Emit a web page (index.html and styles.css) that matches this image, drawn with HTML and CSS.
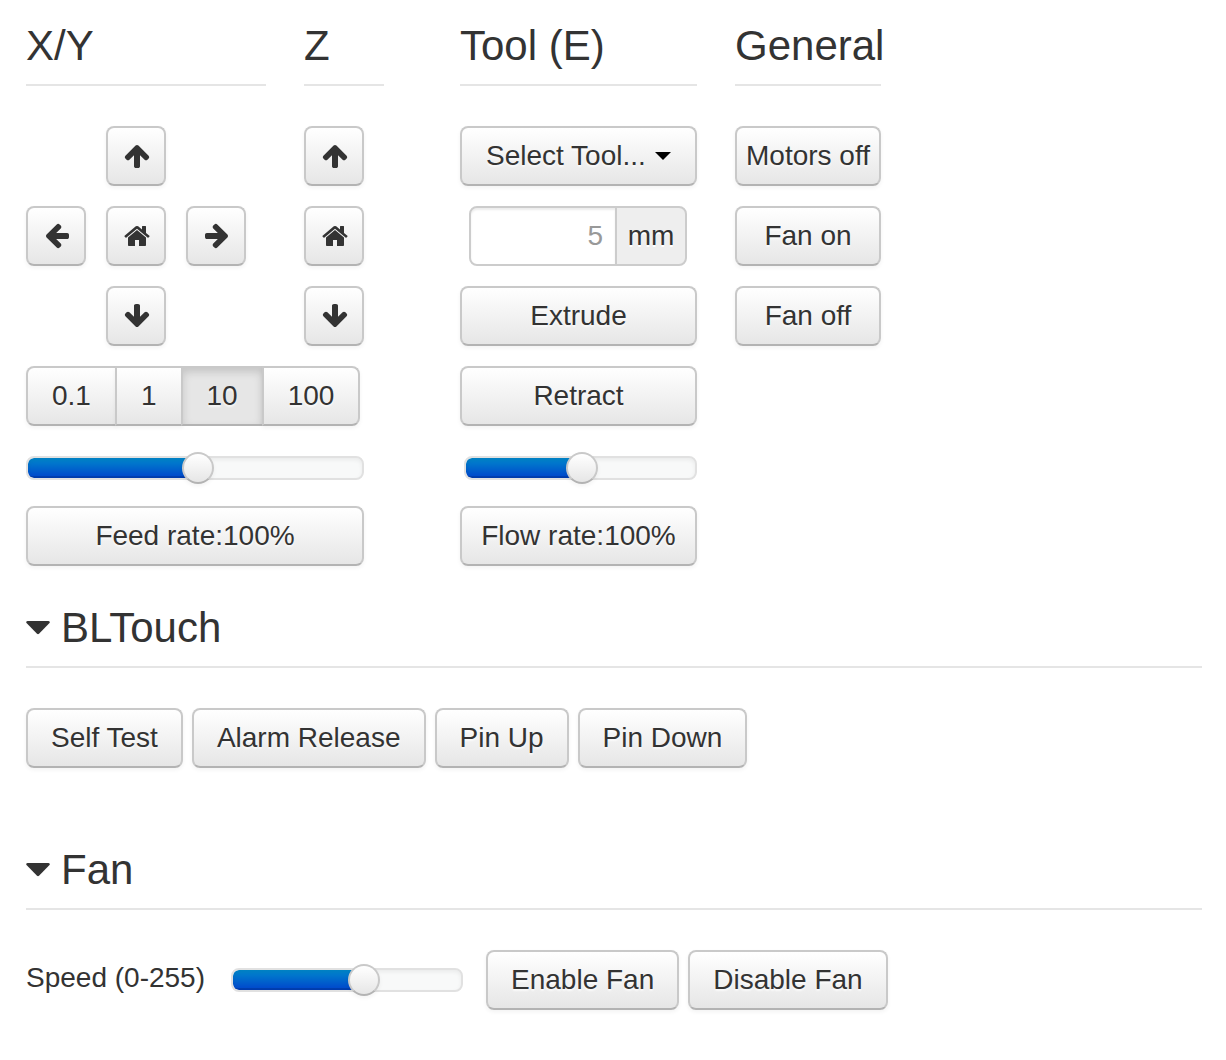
FILE: index.html
```html
<!DOCTYPE html>
<html lang="en">
<head>
<meta charset="utf-8">
<meta name="viewport" content="width=device-width, initial-scale=1">
<title>Printer control</title>
<link rel="stylesheet" href="styles.css">
</head>
<body>
<svg class="sprite" aria-hidden="true">
  <symbol id="arrow-up" viewBox="0 0 1792 1792"><path fill="currentColor" d="M1675 971q0 51-37 90l-75 75q-38 38-91 38-54 0-90-38l-294-293v704q0 52-37.500 84.500t-90.500 32.500h-128q-53 0-90.500-32.500t-37.500-84.500v-704l-294 293q-36 38-90 38t-90-38l-75-75q-38-38-38-90 0-53 38-91l651-651q35-37 90-37 54 0 91 37l651 651q37 39 37 91z"/></symbol>
  <symbol id="home" viewBox="0 0 1792 1792"><path fill="currentColor" d="M1472 992v480q0 26-19 45t-45 19h-384v-384h-256v384h-384q-26 0-45-19t-19-45v-480q0-1 .5-3t.5-3l575-474 575 474q1 2 1 6zm223-69l-62 74q-8 9-21 11h-3q-13 0-21-7l-692-577-692 577q-12 8-24 7-13-2-21-11l-62-74q-8-10-7-23.500t11-21.500l719-599q32-26 76-26t76 26l244 204v-195q0-14 9-23t23-9h192q14 0 23 9t9 23v408l219 182q10 8 11 21.500t-7 23.500z"/></symbol>
</svg>
<main class="control">
  <div class="panels">
    <div class="axes">
      <div class="axes-row">
        <section class="panel panel-xy">
          <h2 class="heading">X/Y</h2>
          <div class="pad">
            <button class="btn btn-icon pad-up" type="button" aria-label="Y up"><svg class="icon"><use href="#arrow-up"/></svg></button>
            <button class="btn btn-icon pad-left" type="button" aria-label="X left"><svg class="icon icon-left"><use href="#arrow-up"/></svg></button>
            <button class="btn btn-icon pad-home" type="button" aria-label="Home X/Y"><svg class="icon"><use href="#home"/></svg></button>
            <button class="btn btn-icon pad-right" type="button" aria-label="X right"><svg class="icon icon-right"><use href="#arrow-up"/></svg></button>
            <button class="btn btn-icon pad-down" type="button" aria-label="Y down"><svg class="icon icon-down"><use href="#arrow-up"/></svg></button>
          </div>
        </section>
        <section class="panel panel-z">
          <h2 class="heading">Z</h2>
          <div class="stack">
            <button class="btn btn-icon" type="button" aria-label="Z up"><svg class="icon"><use href="#arrow-up"/></svg></button>
            <button class="btn btn-icon" type="button" aria-label="Home Z"><svg class="icon"><use href="#home"/></svg></button>
            <button class="btn btn-icon" type="button" aria-label="Z down"><svg class="icon icon-down"><use href="#arrow-up"/></svg></button>
          </div>
        </section>
      </div>
      <div class="stack feed">
        <div class="btn-group" role="group" aria-label="Distance">
          <button class="btn" type="button">0.1</button>
          <button class="btn" type="button">1</button>
          <button class="btn active" type="button" aria-pressed="true">10</button>
          <button class="btn" type="button">100</button>
        </div>
        <div class="slider-row"><input class="slider" type="range" aria-label="Feed rate" value="51" style="--value: 51%"></div>
        <button class="btn" type="button">Feed rate:100%</button>
      </div>
    </div>
    <section class="panel panel-tool">
      <h2 class="heading">Tool (E)</h2>
      <div class="stack">
        <div class="select-wrap">
          <select class="btn select" aria-label="Tool"><option>Select Tool...</option></select>
          <svg class="select-caret" viewBox="0 0 16 8" aria-hidden="true"><path d="M0 0H16L8 8Z"/></svg>
        </div>
        <div class="amount">
          <input class="amount-input" id="amount" type="text" placeholder="5" aria-label="Extrusion amount">
          <label class="amount-unit" for="amount">mm</label>
        </div>
        <button class="btn" type="button">Extrude</button>
        <button class="btn" type="button">Retract</button>
        <div class="slider-row slider-row-flow"><input class="slider" type="range" aria-label="Flow rate" value="51" style="--value: 51%"></div>
        <button class="btn btn-tight" type="button">Flow rate:100%</button>
      </div>
    </section>
    <section class="panel panel-general">
      <h2 class="heading">General</h2>
      <div class="stack">
        <button class="btn btn-tight" type="button">Motors off</button>
        <button class="btn" type="button">Fan on</button>
        <button class="btn" type="button">Fan off</button>
      </div>
    </section>
  </div>

  <section class="section">
    <h2 class="heading"><a class="toggle" href="#bltouch"><svg class="toggle-caret" viewBox="0 0 24 14" aria-hidden="true"><path d="M1.500 0H22.500Q24.500 .5 23.500 2L13 12.800Q12 13.600 11 12.800L.5 2Q-.5 .5 1.500 0Z" fill="currentColor"/></svg>BLTouch</a></h2>
    <div class="actions" id="bltouch">
      <button class="btn" type="button">Self Test</button>
      <button class="btn" type="button">Alarm Release</button>
      <button class="btn" type="button">Pin Up</button>
      <button class="btn" type="button">Pin Down</button>
    </div>
  </section>

  <section class="section">
    <h2 class="heading"><a class="toggle" href="#fan"><svg class="toggle-caret" viewBox="0 0 24 14" aria-hidden="true"><path d="M1.500 0H22.500Q24.500 .5 23.500 2L13 12.800Q12 13.600 11 12.800L.5 2Q-.5 .5 1.500 0Z" fill="currentColor"/></svg>Fan</a></h2>
    <div class="actions" id="fan">
      <label class="speed-label" for="speed">Speed (0-255)</label>
      <input class="slider slider-speed" id="speed" type="range" min="0" max="255" value="149" style="--value: 58%">
      <button class="btn" type="button">Enable Fan</button>
      <button class="btn" type="button">Disable Fan</button>
    </div>
  </section>
</main>
</body>
</html>
```
FILE: styles.css
```css
* {
  box-sizing: border-box;
}

body {
  margin: 0;
  background: #fff;
  color: #333;
  font-family: "Liberation Sans", Arial, sans-serif;
  font-size: 28px;
  line-height: 40px;
}

button, input, select {
  margin: 0;
  color: inherit;
  font: inherit;
}

.sprite {
  display: none;
}

.control {
  padding: 4px 24px 50px 26px;
}

.heading {
  margin: 0 0 40px;
  padding-top: 4px;
  border-bottom: 2px solid #e5e5e5;
  font-size: 42px;
  font-weight: 400;
  line-height: 76px;
  white-space: nowrap;
}

/* Jog, tool and general panels */
.panels {
  display: flex;
  flex-wrap: wrap;
  align-items: flex-start;
}

.axes {
  margin-right: 76px;
}

.axes-row {
  display: flex;
  gap: 38px;
  margin-bottom: 20px;
}

.panel-xy {
  width: 240px;
}

.panel-z {
  width: 80px;
}

.panel-tool {
  width: 237px;
  margin-right: 38px;
}

.panel-general {
  width: 146px;
}

.pad {
  display: grid;
  grid-template-columns: repeat(3, 60px);
  grid-template-areas: ". up ." "left home right" ". down .";
  gap: 20px;
}

.pad-up { grid-area: up; }
.pad-left { grid-area: left; }
.pad-home { grid-area: home; }
.pad-right { grid-area: right; }
.pad-down { grid-area: down; }

.stack {
  display: flex;
  flex-direction: column;
  gap: 20px;
}

.feed {
  width: 338px;
}

/* Buttons */
.btn {
  height: 60px;
  padding: 0 24px;
  border: 2px solid #c9c9c9;
  border-bottom-color: #b3b3b3;
  border-radius: 8px;
  background: linear-gradient(#fff, #e6e6e6);
  box-shadow: inset 0 2px 0 rgba(255, 255, 255, .2), 0 2px 4px rgba(0, 0, 0, .05);
  text-align: center;
  text-shadow: 0 2px 2px rgba(255, 255, 255, .75);
  white-space: nowrap;
  cursor: pointer;
}

.btn-tight {
  padding: 0 4px;
}

.btn-icon {
  display: flex;
  align-items: center;
  justify-content: center;
  width: 60px;
  padding: 0 0 0 2px;
}

.icon {
  flex: none;
  width: 28px;
  height: 28px;
}

.icon-left { transform: rotate(-90deg); }
.icon-right { transform: rotate(90deg); }
.icon-down { transform: rotate(180deg); }

.btn-group {
  display: flex;
}

.btn-group .btn {
  border-radius: 0;
}

.btn-group .btn + .btn {
  margin-left: -2px;
}

.btn-group .btn:first-child {
  border-radius: 8px 0 0 8px;
}

.btn-group .btn:last-child {
  border-radius: 0 8px 8px 0;
}

.btn-group .active {
  background: #e6e6e6;
  box-shadow: inset 0 4px 8px rgba(0, 0, 0, .15);
}

/* Tool picker and amount */
.select-wrap {
  position: relative;
  display: flex;
}

.select {
  flex: 1;
  appearance: none;
  text-align: left;
}

.select-caret {
  position: absolute;
  top: 26px;
  right: 26px;
  width: 16px;
  height: 8px;
  pointer-events: none;
}

.amount {
  display: flex;
  padding-left: 9px;
}

.amount-input {
  width: 148px;
  height: 60px;
  padding: 0 12px;
  border: 2px solid #ccc;
  border-radius: 8px 0 0 8px;
  background: #fff;
  box-shadow: inset 0 2px 2px rgba(0, 0, 0, .075);
  text-align: right;
}

.amount-input::placeholder {
  color: #999;
  opacity: 1;
}

.amount-unit {
  width: 72px;
  height: 60px;
  margin-left: -2px;
  padding: 8px 0;
  border: 2px solid #ccc;
  border-radius: 0 8px 8px 0;
  background: #eee;
  text-align: center;
  text-shadow: 0 2px 0 #fff;
}

/* Sliders */
.slider-row {
  display: flex;
  align-items: center;
  height: 40px;
  padding-top: 4px;
}

.slider-row-flow {
  padding-left: 4px;
}

.slider {
  appearance: none;
  width: 100%;
  height: 32px;
  background: none;
  cursor: pointer;
}

.slider::-webkit-slider-runnable-track {
  height: 24px;
  border: 2px solid #e1e1e1;
  border-radius: 8px;
  background:
    linear-gradient(transparent 18px, rgba(0, 0, 0, .15) 18px) 0 0 / var(--value) 100% no-repeat padding-box,
    linear-gradient(#08c, #04c) 0 0 / var(--value) 100% no-repeat padding-box,
    #f8f9f9;
  box-shadow: inset 0 2px 4px rgba(0, 0, 0, .06);
}

.slider::-webkit-slider-thumb {
  appearance: none;
  width: 32px;
  height: 32px;
  margin-top: -6px;
  border: 2px solid #c9c9c9;
  border-bottom-color: #b3b3b3;
  border-radius: 50%;
  background: linear-gradient(#fff, #e6e6e6);
  box-shadow: 0 2px 4px rgba(0, 0, 0, .05);
}

/* Collapsible sections */
.section {
  margin-top: 20px;
}

.section + .section {
  margin-top: 60px;
}

.toggle {
  display: flex;
  align-items: center;
  gap: 11px;
  color: inherit;
  text-decoration: none;
}

.toggle-caret {
  width: 24px;
  height: 14px;
}

.actions {
  display: flex;
  flex-wrap: wrap;
  align-items: center;
  gap: 9px;
}

.actions .btn {
  padding: 0 23px;
}

.speed-label {
  padding-bottom: 4px;
}

.slider-speed {
  width: 232px;
  margin: 0 14px 0 17px;
}
```
